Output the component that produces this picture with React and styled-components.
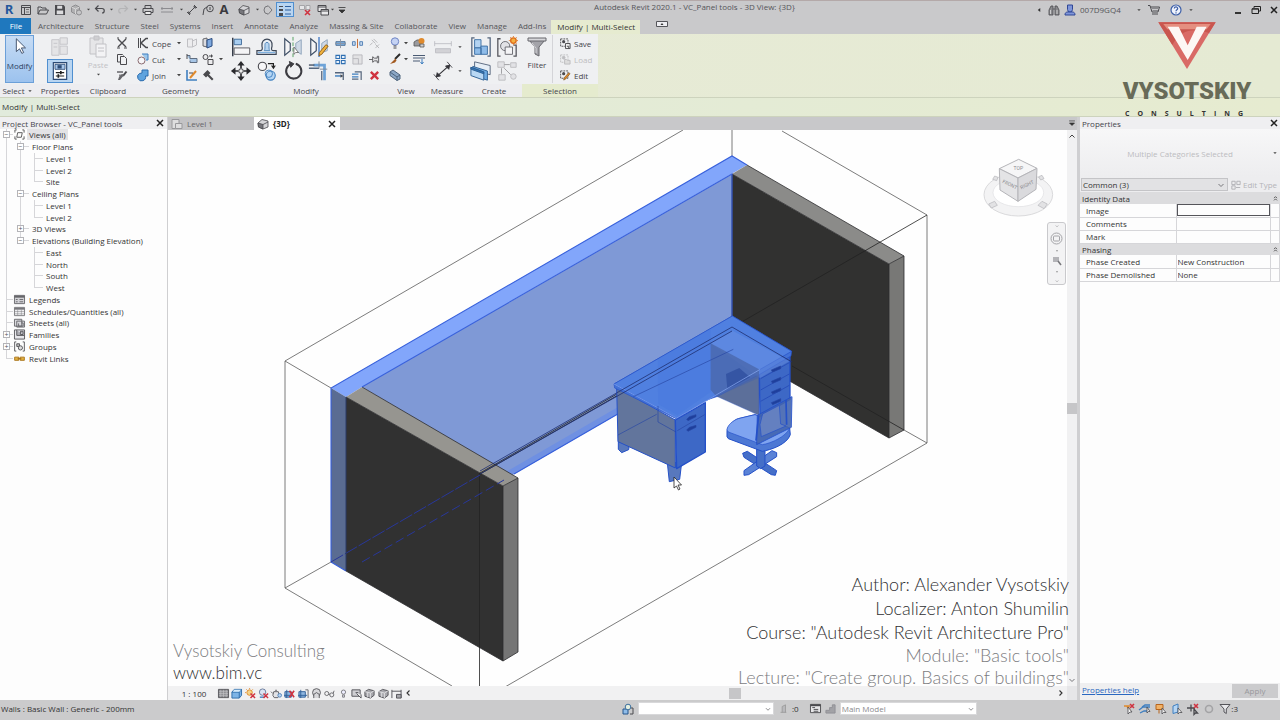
import React, { useState } from "react";
import styled, { createGlobalStyle, css } from "styled-components";

const GlobalStyle = createGlobalStyle`
  * {
    box-sizing: border-box;
  }

  body {
    margin: 0;
    background: #cbcbcb;
    color: #333;
    font-family: "Open Sans", "Noto Sans", sans-serif;
    font-size: 8px;
    line-height: 11px;
  }

  button, input, select {
    margin: 0;
    padding: 0;
    border: 0;
    background: none;
    color: inherit;
    font: inherit;
  }

  ul {
    margin: 0;
    padding: 0;
    list-style: none;
  }
`;

/* ---------- icons ---------- */

const INK = "#4a4a4e";
const BLUE = "#3f7fc0";
const SKY = "#9cc6ea";
const ORANGE = "#e08a2c";
const RED = "#cf3340";

// small icons live on a 12x12 grid
const small = {
  doc: (
    <g fill="none" stroke={INK}>
      <path d="M1.5 1.5h9v9h-9zM1.5 3.5h9M4.5 3.5v7" />
      <path d="M6 5.5h3M6 8h3" stroke="#777" />
    </g>
  ),
  open: <path d="M1 10V3h3l1 1h4v2M1 10l2-4h8.5L9.500 10z" fill="none" stroke={INK} />,
  save: (
    <g>
      <path d="M1 1h8.500L11 2.500V11H1z" fill={INK} />
      <path d="M3.200 1.700h5v3h-5zM2.700 6.500h6.500v3.800H2.700z" fill="#dcdcde" />
    </g>
  ),
  sync: (
    <g fill="#b0b0b2" stroke="#8d8d90">
      <path d="M1.500 3l4-2 4 2v5l-4 2-4-2z" />
      <path d="M1.500 3l4 2 4-2M5.500 5v5" fill="none" stroke="#d5d5d6" />
      <circle cx="9" cy="8.500" r="2.500" fill="#c6c6c8" />
    </g>
  ),
  undo: <path d="M4.500 1.500L1.500 4.500l3 3M1.500 4.500H8c3 0 3 4.500 0 4.500" fill="none" stroke={INK} strokeWidth="1.200" />,
  redo: <path d="M7.500 1.500l3 3-3 3M10.500 4.500H4c-3 0-3 4.500 0 4.500" fill="none" stroke="#b4b4b6" strokeWidth="1.200" />,
  print: (
    <g stroke={INK} fill="none">
      <path d="M3 4V1.500h6V4M1 4.500h10v4H1z" />
      <path d="M3 7.500h6v3H3z" fill="#eee" />
    </g>
  ),
  measureBar: <path d="M0 4.500h12M0 8h12M1 3v3M11 3v3" stroke="#8c8c90" fill="none" />,
  dim: (
    <g stroke={INK} fill={INK}>
      <path d="M2 10l8-8M1 8l3 3M8 1l3 3" fill="none" />
      <path d="M2 10l.5-3L5 9.500zM10 2l-3 .5L9.500 5z" strokeWidth="0" />
    </g>
  ),
  tag: (
    <g fill="none" stroke={INK}>
      <path d="M1 11l1-6 3-2" />
      <circle cx="8" cy="4.500" r="3.300" />
      <path d="M8 3v3" />
    </g>
  ),
  house: (
    <g stroke={INK} strokeWidth=".8">
      <path d="M1 5l4-3.500L11 3v6L6 11 1.500 9z" fill="#d5d5d8" />
      <path d="M1 5l5 1.500V11L1.500 9z" fill="#77777c" />
      <path d="M6 6.500L11 4" fill="none" />
    </g>
  ),
  section: <path d="M6 1.500L10 6l-4 4.500M6 2a4 4 0 100 8" fill="none" stroke="#77777b" />,
  thin: (
    <g fill={INK}>
      <path d="M0 2h4v1H0zM0 5h4v2H0zM0 9h4v3H0z" />
      <path d="M6 2h6v1H6zM6 5.500h6v1H6zM6 9.500h6v1H6z" fill="#2d5fa0" />
    </g>
  ),
  closeHidden: (
    <g>
      <path d="M.5 1.500h5v4h-5zM7 1.500h4v4H7z" fill="#e6e6e8" stroke="#a5a5a8" />
      <path d="M6 6l5 5M11 6l-5 5" stroke={RED} strokeWidth="1.600" />
    </g>
  ),
  windows: (
    <g fill="#e8e8ea" stroke={INK}>
      <path d="M1 1.500h8v6H1zM1 3h8" />
      <path d="M4 5.500h7.500V11H4zM4 7h7.500" />
    </g>
  ),
  binoculars: (
    <g fill="#8a8a8e" stroke={INK} strokeWidth=".8">
      <path d="M1 11V6l2-4h2v9zM11 11V6L9 2H7v9zM5 5h2" />
      <path d="M2.500 6v4M9 6v4" stroke="#ddd" />
    </g>
  ),
  user: (
    <g fill="#7f95d8" stroke="#2f4796">
      <path d="M3.500 1h5v4.500L7.500 8h-3l-1-2.500z" />
      <path d="M1 11c0-3 2-3 3.500-3h3c1.500 0 3.500 0 3.500 3z" />
    </g>
  ),
  cart: (
    <g fill="none" stroke={INK}>
      <path d="M0 1.500h2l2 6.500h6l1.500-5H2.600M4 10h6" />
      <path d="M4 4.500h6.500M4.500 6.500h5.500" stroke="#8a8a8e" />
    </g>
  ),
  help: (
    <g>
      <circle cx="6" cy="6" r="5" fill="#eef2fb" stroke="#3d5fa8" strokeWidth="1.200" />
      <path d="M4.300 4.600c0-2.200 3.400-2.200 3.400 0 0 1.300-1.700 1.200-1.700 2.700M6 8.300v1.200" fill="none" stroke="#3d5fa8" strokeWidth="1.200" />
    </g>
  ),
  minimize: <path d="M3 9h6" stroke="#222" strokeWidth="1.800" />,
  restore: <path d="M4 4V2.500h6.500v4.500H8.500M2 4.800h6.500v4.700H2zM2 5h6.500" fill="none" stroke="#222" />,
  close: <path d="M3 3l6 6M9 3L3 9" stroke="#222" strokeWidth="1.500" />,
  scissors: (
    <g stroke={INK} fill="none">
      <path d="M2 2l8 8M10 2l-8 8" strokeWidth="1.400" />
      <path d="M1 1h2M9 1h2M1 11h3M8 11h3" />
    </g>
  ),
  copy: <path d="M1.500 1.500h5l1 1M1.500 1.500V9H4M4.500 3.500h4l2 2v6h-6z" fill="none" stroke={INK} />,
  match: (
    <g>
      <path d="M1 2h6v2H1zM3 5.500h4v2H3z" fill="#88888c" />
      <path d="M10.500 2.500L7 7" stroke={INK} strokeWidth="2" />
      <path d="M8 6L4 11H2l1-3 3-3z" fill="#66666a" />
    </g>
  ),
  cope: (
    <g fill="none" stroke={INK}>
      <path d="M1.500 1v10M3.500 1v10" />
      <path d="M11 1.500H9L4 6l5 4.500h2" strokeWidth="1.600" />
    </g>
  ),
  cut: (
    <g>
      <path d="M5 1h6v6H9" fill={SKY} stroke={BLUE} />
      <circle cx="4.500" cy="7.500" r="3.500" fill="#f6f6f8" stroke="#8a6b70" />
    </g>
  ),
  join: <path d="M5 1h6v6H8.500A4 4 0 112.500 4.500L5 4z" fill="#5fa3de" stroke="#2c6cae" />,
  wallJoin: <path d="M1.500 2h5v8h-5zM6.500 4l4-2v6l-4 2" fill="#ececee" stroke="#c0c0c4" />,
  split: (
    <g>
      <path d="M1 2l4-1v9l-4-1z" fill="#dcdce0" stroke={INK} strokeWidth=".8" />
      <path d="M5 3l5-1.500v7.500L5 11z" fill="#7fa9df" stroke="#27497e" />
    </g>
  ),
  beam: (
    <g>
      <path d="M1 2.500h3v3h7v4H4v-2" fill="#a6c5e6" stroke="#5f6d80" />
      <path d="M1 1v5" stroke={INK} />
    </g>
  ),
  paint: (
    <g fill="#ececee" stroke={INK}>
      <circle cx="3.500" cy="4" r="2.500" />
      <path d="M6 6.500h5v5H6z" />
      <path d="M7 3h4M9.500 1.500v3" fill="none" />
    </g>
  ),
  demolish: (
    <g>
      <path d="M1 1v10h10" fill="none" stroke={BLUE} strokeWidth="1.600" />
      <path d="M4 9L10 2" stroke={ORANGE} strokeWidth="2" />
      <path d="M3 4h4" stroke={INK} />
    </g>
  ),
  hammer: <path d="M1 5.500L5.500 1l3 3L7 5.500l4.500 4.500L10 11.500 5.500 7 4 8.500z" fill={INK} />,
  splitEl: (
    <g>
      <path d="M1 4h10v4H1z" fill="#7fb1e2" stroke="#4c6d93" />
      <path d="M0 6h12M6 1v10" stroke="#8b95a4" />
    </g>
  ),
  splitGap: (
    <g fill="#c6d9ee" stroke="#4f7db3">
      <path d="M.5 4h3v4h-3zM8.500 4h3v4h-3z" />
      <path d="M6 1v10" stroke="#c4662c" />
    </g>
  ),
  unpin: (
    <g stroke="#b3b3b7" fill="#dadade">
      <path d="M3 2l4 4M5 1l4 4M1 8l3-3" />
      <path d="M7 7l4 4M11 7l-4 4" />
    </g>
  ),
  array: <path d="M1 1.500h4v3.500H1zM7 1.500h4v3.500H7zM1 7h4v3.500H1zM7 7h4v3.500H7z" fill="#e6f0fa" stroke="#2f6fb2" strokeWidth="1.100" />,
  scale: <path d="M1 1h10v10H1zM1 5h6v6" fill="#e2e2e4" stroke="#b8b8bc" />,
  pin: <path d="M0 6h4M4 3v6l2-1.500h3V9.500h1.500v-7H9v2H6z" fill="#e6e6e8" stroke="#5a5a5e" />,
  trim: (
    <g>
      <path d="M0 6.500h7" stroke="#3f7fc0" strokeWidth="1.600" />
      <path d="M0 3h9v8" fill="none" stroke="#55657c" strokeWidth="1.400" />
      <path d="M6 4.500l3 2-3 2z" fill={INK} />
    </g>
  ),
  trimMulti: (
    <g>
      <path d="M0 4.500h7M0 7.500h7" stroke="#3f7fc0" strokeWidth="1.500" />
      <path d="M3 2h7v9M0 10h7" fill="none" stroke="#55657c" strokeWidth="1.300" />
    </g>
  ),
  remove: <path d="M2 2l8 8M10 2l-8 8" stroke={RED} strokeWidth="2.600" />,
  bulb: (
    <g>
      <circle cx="6" cy="4.500" r="3.700" fill="#c5d3f4" stroke="#6e84c4" />
      <path d="M4.500 9h3M4.500 11h3" stroke={INK} />
    </g>
  ),
  override: (
    <g>
      <path d="M1 5l3-2h3v6H1z" fill="#9a9a9e" stroke="#555" strokeWidth=".8" />
      <circle cx="8.500" cy="4" r="3" fill={ORANGE} />
      <path d="M7 7h4v3H7z" fill="#cfcfd2" stroke="#555" strokeWidth=".8" />
    </g>
  ),
  brush: (
    <g>
      <path d="M11 1L6 6" stroke="#2b2b2b" strokeWidth="2" />
      <path d="M6.500 5.500L1 11l5-1.500 1.500-2z" fill="#a35a20" />
    </g>
  ),
  linework: (
    <g>
      <path d="M0 2.500h12M0 5h12M0 8h7" stroke="#4a5b74" strokeWidth="1.200" />
      <path d="M9 6v5M7.500 9L9 11l1.500-2" stroke={BLUE} fill="none" />
    </g>
  ),
  displace: (
    <g>
      <path d="M1 3l3-2 7 5v4l-3 1.500L1 6.500z" fill="#8ba7c6" stroke="#4f647d" />
      <path d="M1 3l7 5v3.500M8 8l3-2" fill="none" stroke="#4f647d" />
    </g>
  ),
  selSave: (
    <g>
      <path d="M.7 1h8v8h-8z" fill="none" stroke={INK} strokeDasharray="2 1" />
      <circle cx="4" cy="4" r="1.700" fill={INK} />
      <path d="M6 6h5v5.500H6z" fill="#eee" stroke={INK} />
      <path d="M7.500 9h2v2.500" stroke={INK} fill="none" />
    </g>
  ),
  selLoad: (
    <g stroke="#bdbdc0" fill="none">
      <path d="M.7 1h8v8h-8z" strokeDasharray="2 1" />
      <path d="M5 6l2 0 1 1h3v4H5z" fill="#ddd" />
      <circle cx="4" cy="4" r="1.500" fill="#bdbdc0" />
    </g>
  ),
  selEdit: (
    <g>
      <path d="M.7 1h8v8h-8z" fill="none" stroke={INK} strokeDasharray="2 1" />
      <circle cx="4" cy="4" r="1.700" fill={INK} />
      <path d="M11 4l-5 6-2 1 .5-2.500 5-5.500z" fill={ORANGE} stroke="#6b4a1c" strokeWidth=".6" />
    </g>
  ),
  views: (
    <g fill="none" stroke="#555">
      <path d="M3 1H1v3M9 1h2v3M3 11H1V8M9 11h2V8" />
      <path d="M4 4h5L8 9H3z" />
    </g>
  ),
  legend: (
    <g stroke="#66666a" fill="#d2d2d6">
      <path d="M.5 1.500h11v9H.5z" />
      <path d="M.5 3h11" strokeWidth="2" />
      <path d="M2 6h2M6 6h4M2 8.500h2M6 8.500h4" />
    </g>
  ),
  schedule: (
    <g stroke="#77777b" fill="#efeff1">
      <path d="M.5 1.500h11v9H.5z" />
      <path d="M.5 3h11" strokeWidth="2" />
      <path d="M.5 6h11M.5 8.500h11M4 4v6M8 4v6" strokeWidth=".5" />
    </g>
  ),
  sheet: (
    <g stroke="#66666a" fill="#dadade">
      <path d="M.5 2.500h8V10H.5zM3 4.500h8.500V11H3z" />
      <path d="M8 6.500h2V10H5V7" fill="none" />
    </g>
  ),
  family: (
    <g stroke="#55555a" fill="#e8e8ec">
      <path d="M.5 1h11v10H.5z" />
      <path d="M3 1v6h8M7 2.500h3V6H7z" fill="#b0b0b6" />
    </g>
  ),
  groups: (
    <g fill="none" stroke="#55555a">
      <path d="M2.500 1H.7v10h1.800M9.500 1h1.800v10H9.500" />
      <path d="M3 3h3v3H3z" fill="#bbb" />
      <circle cx="7" cy="7.500" r="2.300" fill="#ddd" />
    </g>
  ),
  link: (
    <g fill="#e2b040" stroke="#a8741a">
      <path d="M.7 4.500h4.500v3.500H.7zM6.800 4.500h4.500v3.500H6.800z" />
      <path d="M4 6.200h4" strokeWidth="1.600" />
    </g>
  ),
  plan: (
    <g fill="#dededf" stroke="#98989b">
      <path d="M1 1.500h7v9H1z" />
      <path d="M4.500 5.500h6.500v5H4.500z" />
    </g>
  ),
  detail: (
    <g>
      <path d="M.5 1.500h11v9H.5z" fill="#8d8d91" stroke="#55555a" />
      <path d="M1 4h10M1 6h10M1 8h10M3 2v8M6 2v8M9 2v8" stroke="#c9c9cc" strokeWidth=".6" />
    </g>
  ),
  cube: (
    <g stroke="#2d6ba8">
      <path d="M1 4.500l2.500-3h8v6.500L9 11H1z" fill="#7db4e6" />
      <path d="M1 4.500h8V11M9 4.500l2.500-3" fill="none" />
      <path d="M3.500 2h7.500L9 4H2z" fill="#d6eafa" strokeWidth="0" />
    </g>
  ),
  sunOff: (
    <g>
      <circle cx="5" cy="5" r="3" fill="#f4d48a" stroke={ORANGE} />
      <path d="M5 0v1M0 5h1M1.500 1.500l1 1M8.500 1.500l-1 1" stroke={ORANGE} />
      <path d="M6 6l5 5M11 6l-5 5" stroke={RED} strokeWidth="1.600" />
    </g>
  ),
  shadowOff: (
    <g>
      <circle cx="5" cy="4.500" r="3.500" fill="#dbe4f2" stroke="#66789a" />
      <path d="M2 10h5" stroke={BLUE} strokeWidth="1.500" />
      <path d="M6 6l5 5M11 6l-5 5" stroke={RED} strokeWidth="1.600" />
    </g>
  ),
  teapot: (
    <g fill="#e3e3e6" stroke="#5c5c60">
      <path d="M3 4h5l1 4-1.500 2.500H3.500L2 8zM2 6L0 4M4.500 2.500h2" />
      <circle cx="9.500" cy="8" r="2" fill="#b9d3ef" stroke="#5585bb" />
    </g>
  ),
  cropOff: (
    <g>
      <path d="M1 4h7v6H1zM3 2v9M0 8h10" fill="#8fb7e0" stroke="#2e5f98" />
      <path d="M6 3l5 7M11 3l-5 7" stroke={RED} strokeWidth="1.800" />
    </g>
  ),
  crop: (
    <g>
      <path d="M1 4h7v6H1zM3 2v9M0 8h10" fill="#8fb7e0" stroke="#2e5f98" />
      <path d="M8 2h3v9" fill="none" stroke="#66666a" />
    </g>
  ),
  lock: (
    <g fill="#d8d8db" stroke="#55555a">
      <circle cx="6" cy="5" r="4.300" />
      <path d="M3 11V7l3-2 3 2v4" />
    </g>
  ),
  glasses: (
    <g fill="none" stroke="#66666a">
      <circle cx="3" cy="6" r="2.200" />
      <circle cx="8.500" cy="7.500" r="2.200" />
      <path d="M5 6.500l1.500.5M10 6l1-3" />
    </g>
  ),
  bulbSmall: (
    <g fill="#eef" stroke="#77777c">
      <circle cx="6" cy="4.500" r="2.300" />
      <path d="M5 7.500h2v2.500H5z" />
    </g>
  ),
  panel: (
    <g fill="#cfcfd3" stroke="#4f4f54">
      <path d="M1 2h9v7H1z" />
      <path d="M5 5h3M6 6l5 5v-4" fill="#eee" />
    </g>
  ),
  model: (
    <g fill="#a7a7ac" stroke="#4f4f54">
      <path d="M1 4l4-2.500L11 3v5l-4 3-6-2z" />
      <path d="M1 4l6 1.500V11M7 5.500L11 3M4 5v5" fill="none" stroke="#e0e0e3" />
    </g>
  ),
  reveal: (
    <g fill="none" stroke="#4f4f54">
      <path d="M1 2v9M11 2v9M1 3.500h10" />
      <path d="M6 7h5v4H6z" fill="#a7a7ac" />
    </g>
  ),
  workset: (
    <g>
      <path d="M1 6h5v5H1z" fill="#8fbce8" stroke="#27568c" />
      <circle cx="6" cy="4" r="2.800" fill="#e6f0e0" stroke="#3b6f9e" />
      <path d="M9 5h2v6H8" fill="none" stroke={INK} />
    </g>
  ),
  editable: <path d="M3 10h7M5 10V3l4-2v9" fill="#b9b9bc" stroke="#999" />,
  design: (
    <g stroke={INK} fill="#e6e6e8">
      <path d="M.5 1.500h11v9H.5z" />
      <path d="M.5 2.500h11" strokeWidth="2" />
      <path d="M2.500 5h3M4 7h5M4 9h5" />
    </g>
  ),
  design2: <path d="M1 8h4V5h3V2h3v9H1z" fill="#a2a2a6" stroke="#919195" />,
  pickOff: (
    <g>
      <path d="M1 3h6M4 3l3 5" stroke={ORANGE} strokeWidth="1.600" />
      <path d="M5 4v7l2-2h2z" fill="#f6f6f6" stroke={INK} strokeWidth=".8" />
      <path d="M7 1l4 4M11 1L7 5" stroke={RED} strokeWidth="1.600" />
    </g>
  ),
  pickUnder: (
    <g>
      <path d="M0 7l4-3h7M1 10l4-2h5M3 4l3-2h5" fill="none" stroke={BLUE} strokeWidth="1.300" />
      <path d="M8 4v6l1.500-1.500H11z" fill="#f6f6f6" stroke={INK} strokeWidth=".8" />
    </g>
  ),
  pickPin: (
    <g>
      <path d="M1 1.500h7v5H1zM4 6.500v4" fill="#f1b267" stroke="#b7641c" />
      <path d="M7 5v6l1.500-1.500h2.500z" fill="#f6f6f6" stroke={INK} strokeWidth=".8" />
    </g>
  ),
  pickFace: (
    <g>
      <path d="M2 3l5-2v8l-5 1.500z" fill="#b6d5f3" stroke={BLUE} />
      <path d="M7 5v6l1.500-1.500h2.500z" fill="#f6f6f6" stroke={INK} strokeWidth=".8" />
    </g>
  ),
  drag: (
    <g>
      <path d="M0 5h8M4 1.500v7M7 6v5.500l1.500-1.500h2z" fill="none" stroke={INK} strokeWidth="1.300" />
      <path d="M7 1l4 4M11 1L7 5" stroke={RED} strokeWidth="1.600" />
    </g>
  ),
  ring: <circle cx="6" cy="6" r="3.500" fill="none" stroke="#a3a3a5" strokeWidth="1.600" />,
  funnel: <path d="M1 1.500h10L7.300 6v4.500L5 9V6z" fill="#e8e8ea" stroke="#55555a" />,
  editType: <path d="M1 1.500h4v4H1zM7 1.500h4v4H7zM1 7h4v4H1zM6 9h5" fill="none" stroke="#aaaaae" />,
  down: <path d="M4 5h4L6 7.200z" fill="#444" />,
  customize: <path d="M2.500 3.500h7M3 6h6L6 9z" fill="#333" stroke="#333" strokeWidth=".8" />,
  left: <path d="M7.500 3.500v5L4.500 6z" fill="#333" />,
  chevron: <path d="M3.500 5L6 7.500 8.500 5" fill="none" stroke="#77777b" />,
  up: <path d="M3.500 7.500L6 5l2.500 2.500" fill="none" stroke="#444" />,
  next: <path d="M4.500 3.500L7 6 4.500 8.500" fill="none" stroke="#333" strokeWidth="1.100" />,
  prev: <path d="M7.500 3.500L5 6l2.500 2.500" fill="none" stroke="#333" strokeWidth="1.100" />,
  collapse: <path d="M4 5.500L6 3.500l2 2M4 8.500L6 6.500l2 2" fill="none" stroke="#333" />,
  ribbonToggle: (
    <g>
      <path d="M.5 3.500h11v5H.5z" fill="#eeeef2" stroke="#55555a" />
      <path d="M4.500 7h3L6 5z" fill="#333" />
    </g>
  ),
};

// ribbon icons live on a 24x24 grid
const large = {
  cursor: <path d="M8 3v14l3.500-3 2.500 5 2-1-2.500-5h4.500z" fill="#fff" stroke="#3a4a66" />,
  props: (
    <g fill="#e4e4e6" stroke="#c4c4c8">
      <path d="M3 4h8v17H3zM12 2h8v7h-8zM12 11h8v9h-8z" />
      <path d="M5 8h4M5 12h4" />
    </g>
  ),
  palette: (
    <g>
      <path d="M4 2h16v20H4z" fill="#fff" stroke="#2c4a74" strokeWidth="1.400" />
      <path d="M6 4h12v6H6z" fill="#a9c7ea" stroke="#2c4a74" />
      <path d="M9 5h5v4H9z" fill="#2c4a74" />
      <path d="M7 14h10M7 18h10" stroke="#222" strokeWidth="1.400" />
      <path d="M13 12v4M10 16v4" stroke="#222" strokeWidth="2" />
    </g>
  ),
  paste: (
    <g fill="#e6e6e8" stroke="#c2c2c6">
      <path d="M4 3h13v16H4z" />
      <path d="M8 1h5v4H8z" fill="#cfcfd2" />
      <path d="M10 9h10v13H10z" fill="#f3f3f5" />
      <path d="M12 13h6M12 16h6" />
    </g>
  ),
  align: (
    <g>
      <path d="M3 2v20" stroke="#333a48" strokeWidth="1.600" />
      <path d="M4.500 3.500h8v6h-8z" fill="#a8cdf0" stroke="#3b6896" />
      <path d="M4.500 13h17v7h-17z" fill="#f4f4f6" stroke="#55555c" />
    </g>
  ),
  offset: (
    <g fill="none">
      <path d="M1 20h21v-4h-3c-3 0-2-3-1.500-5C19 1 5 1 6.500 11c.5 2 1 5-2 5H1z" fill="#e9eef4" stroke="#3c4656" strokeWidth="1.300" />
      <path d="M2 18h19" stroke="#7fb0de" strokeWidth="1.400" />
      <path d="M9 16c2-3-1-9 3-9s1 6 3 9z" fill="#b8d5f0" stroke="#4a82b8" />
    </g>
  ),
  mirrorPick: (
    <g>
      <path d="M3 3v18l6-5V8z" fill="#f4f4f6" stroke="#3f4f66" strokeWidth="1.300" />
      <path d="M21 4v16l-6-4V8z" fill="#cfd9e6" stroke="#8ca2bb" />
      <path d="M12 1v22" stroke="#4d9c58" strokeDasharray="4 2" />
      <path d="M13 12v8l2-2 3 0z" fill="#fff" stroke="#555" strokeWidth=".8" />
    </g>
  ),
  mirrorDraw: (
    <g>
      <path d="M3 3v18l6-5V8z" fill="#f4f4f6" stroke="#3f4f66" strokeWidth="1.300" />
      <path d="M21 4v12l-6 2V8z" fill="#cfd9e6" stroke="#8ca2bb" />
      <path d="M12 1v22" stroke="#3b74c4" strokeWidth="1.400" />
      <path d="M22 11l-7 9-3 1.500.5-3.500 7-8.500z" fill="#f0b23c" stroke="#8f5c14" />
    </g>
  ),
  move: (
    <g fill="#2a2a2e">
      <path d="M12 1l4 5H8zM12 23l4-5H8zM1 12l5-4v8zM23 12l-5-4v8z" />
      <path d="M12 5v4M12 15v4M5 12h4M15 12h4" stroke="#2a2a2e" strokeWidth="1.800" />
      <circle cx="12" cy="12" r="2.500" fill="#eee" stroke="#2a2a2e" />
    </g>
  ),
  rotateCopy: (
    <g>
      <circle cx="7" cy="7" r="4.500" fill="#f6f6f8" stroke="#4a4a50" strokeWidth="1.200" />
      <circle cx="16" cy="17" r="5" fill="#b6d6f4" stroke="#3e7fbe" strokeWidth="1.200" />
      <circle cx="14" cy="15" r="4" fill="none" stroke="#3e7fbe" />
      <path d="M13 4h6v4M17 6l2 3 2-3" fill="none" stroke="#222" strokeWidth="1.300" />
    </g>
  ),
  rotate: (
    <g fill="none" stroke="#3c3c42" strokeWidth="2.200">
      <path d="M10 4.200A8.300 8.300 0 1015 4" />
      <path d="M8 1.500l5 2.700L9.500 8z" fill="#3c3c42" strokeWidth="1" />
    </g>
  ),
  corner: (
    <g fill="none">
      <path d="M1 9h11M15 12v10" stroke="#55657c" strokeWidth="1.400" />
      <path d="M6 5.500h12V22" stroke="#6ea3d8" strokeWidth="3" />
      <path d="M1 5.500h6" stroke="#3a4658" strokeWidth="1.400" />
      <path d="M12 1.500v8M21 10h-8" stroke="#7c8796" />
    </g>
  ),
  measureFaded: (
    <g stroke="#bbbbc0" fill="#d2d2d6">
      <path d="M2 8h20M2 5v6M22 5v6" fill="none" />
      <path d="M3 14h18v5H3z" />
    </g>
  ),
  measure: (
    <g fill="none" stroke="#333338">
      <path d="M4 19L20 5" strokeWidth="1.400" />
      <path d="M1 16l6 7M17 1l6 7" />
      <path d="M4 19l1-5 4 4zM20 5l-5 1 4 4z" fill="#333338" />
    </g>
  ),
  assembly: (
    <g>
      <path d="M5 2H2v20h3M19 2h3v20h-3" fill="none" stroke="#55657c" strokeWidth="1.400" />
      <path d="M5 4h7v9H5z" fill="#b4d3f1" stroke="#3b6da3" />
      <path d="M5 13h7v7H5zM12 11h7v9h-7z" fill="#8fbce9" stroke="#3b6da3" />
    </g>
  ),
  group: (
    <g>
      <path d="M5 3H2v19h3M19 10h3v12h-3" fill="none" stroke="#55555c" strokeWidth="1.400" />
      <circle cx="10" cy="11" r="5" fill="#e2e2e6" stroke="#66666c" />
      <path d="M10 12h8v8h-8z" fill="#f4f4f6" stroke="#66666c" />
      <circle cx="19" cy="5" r="3" fill="#f5b040" stroke="#de6e1c" strokeWidth="1.500" />
      <path d="M19 0v1M19 9v1M14 5h1M23 5h1M15.500 1.500l1 1M22.500 8.500l-1-1M22.500 1.500l-1 1" stroke="#de6e1c" />
    </g>
  ),
  parts: (
    <g stroke="#2c5d92">
      <path d="M5 2l17 4v10l-17-4z" fill="#e6eef6" stroke="#55657c" />
      <path d="M3 7l16 5v10L3 17z" fill="#6fabe2" />
      <path d="M1 8l14 5v9L1 17z" fill="#b9d8f4" />
      <path d="M1 8l14 5v2L1 10z" fill="#3478b8" />
    </g>
  ),
  similar: (
    <g stroke="#bcbcc0" fill="#e2e2e5">
      <path d="M2 2h7v6H2zM16 3h6v5h-6zM3 16h7v6H3z" />
      <circle cx="19" cy="18" r="3" />
      <path d="M9 5h6M6 9v6M9 9l7 7" fill="none" stroke="#9a9a9e" />
    </g>
  ),
  filter: (
    <g stroke="#66666c">
      <path d="M4 5h16l-6 7v9l-4-2v-7z" fill="#a3a3a9" />
      <path d="M3 3h18v3H3z" fill="#d7d7db" />
      <path d="M7 8l4 5v5" fill="none" stroke="#d9d9dd" />
    </g>
  ),
};

const Svg = styled.svg`
  display: block;
  flex: none;
  overflow: visible;
`;

const Icon = ({ name, size = 12 }) => (
  <Svg width={size} height={size} viewBox="0 0 12 12" aria-hidden="true">
    {small[name]}
  </Svg>
);

const BigIcon = ({ name, size = 22 }) => (
  <Svg width={size} height={size} viewBox="0 0 24 24" aria-hidden="true">
    {large[name]}
  </Svg>
);

/* ---------- layout ---------- */

const Page = styled.div`
  display: flex;
  flex-direction: column;
  min-height: 100vh;
  overflow: hidden;
`;

const Header = styled.header`
  position: relative;
  overflow: hidden;
  flex: none;
`;

const TitleBar = styled.div`
  display: grid;
  grid-template-columns: 1fr auto 1fr;
  align-items: center;
  height: 18px;
  border-top: 1px solid #b4a9a9;
  background: #c9c9cb;
`;

const QuickAccess = styled.div`
  display: flex;
  align-items: center;
`;

const QuickButton = styled.button`
  display: flex;
  align-items: center;
  justify-content: center;
  width: ${(p) => p.$w}px;
  height: 15px;
  font-size: 13px;
  font-weight: 700;
  color: ${(p) => p.$color || "#3a3a3e"};
  ${(p) =>
    p.$on &&
    css`
      border: 1px solid #4f8fd0;
      background: #b9d5f1;
    `}
`;

const TitleText = styled.div`
  align-self: start;
  padding-left: 109px;
  color: #55555a;
  line-height: 12px;
`;

const Account = styled.div`
  display: flex;
  align-items: center;
  justify-content: flex-end;
  gap: 4px;
  color: #55555a;
`;

const UserName = styled.span`
  width: 50px;
`;

const WindowControls = styled.div`
  display: flex;
  gap: 6px;
  margin-left: 32px;
`;

const IconButton = styled.button`
  display: flex;
  align-items: center;
  justify-content: center;
  height: 12px;
`;

const HelpButton = styled(IconButton)`
  margin-left: 6px;
`;

const TabRow = styled.nav`
  display: flex;
  height: 16px;
  background: #c9c9cb;
`;

const RibbonTab = styled.button`
  padding: 0 5px 0 6px;
  color: #55555a;
  line-height: 16px;
  white-space: nowrap;
  ${(p) =>
    p.$file &&
    css`
      width: 31px;
      margin-right: 1px;
      background: #1f78be;
      color: #fff;
    `}
  ${(p) =>
    p.$active &&
    css`
      margin: 2px 16px 0 0;
      line-height: 14px;
      background: #e6ebd0;
      color: #333;
    `}
`;

const Ribbon = styled.div`
  display: flex;
  height: 64px;
  border-bottom: 1px solid #cdd3bd;
  background: linear-gradient(90deg, #e8ebd8, #e5ead3);
`;

const Panel = styled.section`
  display: flex;
  flex-direction: column;
  width: ${(p) => p.$w}px;
  background: ${(p) => (p.$green ? "#e5ebce" : "#ededf0")};
`;

const PanelBody = styled.div`
  display: flex;
  height: 50px;
  padding: 1px 0 1px ${(p) => p.$pad || 0}px;
  background: #eff0f2;
`;

const PanelTitle = styled.div`
  display: flex;
  align-items: center;
  justify-content: center;
  height: 13px;
  color: #44444a;
`;

const ModifyButton = styled.button`
  display: flex;
  flex-direction: column;
  align-items: center;
  gap: 2px;
  width: 29px;
  border: 1px solid #6b9fd8;
  background: linear-gradient(#c7dcf4, #9cc2ee);
  color: #2e4262;
`;

const Stack = styled.div`
  display: flex;
  flex-direction: column;
  align-items: center;
  width: ${(p) => p.$w}px;
`;

const ToggleButton = styled.button`
  display: flex;
  align-items: center;
  justify-content: center;
  width: 26px;
  height: 24px;
  ${(p) =>
    p.$on &&
    css`
      border: 1px solid #4f8fd0;
      background: #b9d5f1;
    `}
`;

const TallButton = styled.button`
  display: flex;
  flex-direction: column;
  align-items: center;
  width: ${(p) => p.$w}px;
  color: ${(p) => (p.$faded ? "#c2c2c6" : "#44444a")};
`;

const Rows = styled.div`
  display: grid;
  grid-template-rows: repeat(3, 16px);
  grid-template-columns: ${(p) => p.$cols};
  justify-items: ${(p) => p.$align || "center"};
`;

const BigRows = styled.div`
  display: grid;
  grid-template-rows: repeat(2, 24px);
  grid-template-columns: ${(p) => p.$cols};
  place-items: center;
`;

const Tool = styled.button`
  display: flex;
  align-items: center;
  gap: 3px;
  color: ${(p) => (p.$faded ? "#bdbdc0" : "#44444a")};
`;

const Divider = styled.div`
  width: 1px;
  margin-right: 7px;
  background: #d4d4d8;
`;

const OptionsBar = styled.div`
  height: 19px;
  padding-left: 2px;
  border-bottom: 1px solid #cdd3bd;
  background: linear-gradient(90deg, #e1ebdc, #e6ebd0);
  line-height: 18px;
`;

const Brand = styled.div`
  position: absolute;
  top: 22px;
  right: 23px;
  display: flex;
  flex-direction: column;
  align-items: center;
  width: 140px;
`;

const BrandName = styled.div`
  margin-top: 6px;
  color: #686b58;
  font-family: Roboto, sans-serif;
  font-size: 24px;
  font-weight: 900;
  line-height: 30px;
`;

const BrandSub = styled.div`
  width: 124px;
  margin-top: 4px;
  font-size: 7px;
  font-weight: 700;
  letter-spacing: 8px;
  line-height: 8px;
  white-space: nowrap;
`;

const Workspace = styled.main`
  display: grid;
  grid-template-columns: 168px minmax(0, 1fr) 203px;
  flex: 1;
`;

const Dock = styled.aside`
  display: flex;
  flex-direction: column;
  background: #fdfdfd;
  border: solid #cfcfd1;
  border-width: ${(p) => (p.$right ? "0 0 0 3px" : "0 1px 0 0")};
`;

const DockTitle = styled.div`
  display: flex;
  align-items: center;
  justify-content: space-between;
  height: 12px;
  padding: 0 ${(p) => (p.$right ? 0 : 1)}px 0 2px;
  background: #efeff1;
  color: #44444a;
`;

/* ---------- project browser ---------- */

const Tree = styled.ul`
  display: grid;
  grid-auto-rows: 1fr;
  height: 235px;
`;

const TreeRow = styled.li`
  display: flex;
  align-items: center;
  white-space: nowrap;
`;

const line = "linear-gradient(#d6d6d9, #d6d6d9) no-repeat";

const Guide = styled.span`
  display: flex;
  align-items: center;
  align-self: stretch;
  width: ${(p) => p.$w}px;
  padding-left: 3px;
  background: ${(p) =>
    [
      p.$v && `${line} 6px 0 / 1px ${p.$v}`,
      p.$h && `${line} 6px 50% / ${p.$w - 7}px 1px`,
    ]
      .filter(Boolean)
      .join(", ") || "none"};
`;

const Expander = styled.button`
  display: flex;
  align-items: center;
  justify-content: center;
  width: 7px;
  height: 7px;
  border: 1px solid #b4b4b8;
  background: #fff;
  color: #55555a;
  font-size: 7px;
  line-height: 5px;
`;

const TreeLabel = styled.span`
  padding: 0 2px;
  background: ${(p) => (p.$selected ? "#e3e3e5" : "none")};
`;

const TreeIcon = styled.span`
  display: flex;
  width: 13px;
`;

const treeData = [
  { level: 0, label: "Views (all)", box: "−", icon: "views", selected: true },
  { level: 1, label: "Floor Plans", box: "−" },
  { level: 2, label: "Level 1" },
  { level: 2, label: "Level 2" },
  { level: 2, label: "Site", last: true },
  { level: 1, label: "Ceiling Plans", box: "−" },
  { level: 2, label: "Level 1" },
  { level: 2, label: "Level 2", last: true },
  { level: 1, label: "3D Views", box: "+" },
  { level: 1, label: "Elevations (Building Elevation)", box: "−", last: true },
  { level: 2, label: "East", end: true },
  { level: 2, label: "North", end: true },
  { level: 2, label: "South", end: true },
  { level: 2, label: "West", end: true, last: true },
  { level: 0, label: "Legends", icon: "legend" },
  { level: 0, label: "Schedules/Quantities (all)", icon: "schedule" },
  { level: 0, label: "Sheets (all)", icon: "sheet" },
  { level: 0, label: "Families", box: "+", icon: "family" },
  { level: 0, label: "Groups", box: "+", icon: "groups" },
  { level: 0, label: "Revit Links", icon: "link", last: true },
];

const ProjectBrowser = () => (
  <Dock>
    <DockTitle>
      Project Browser - VC_Panel tools
      <IconButton aria-label="Close browser">
        <Icon name="close" />
      </IconButton>
    </DockTitle>
    <Tree>
      {treeData.map((n, i) => (
        <TreeRow key={i}>
          <Guide $w={14} $v={n.level === 0 && n.last ? "50%" : "100%"} $h={n.level === 0}>
            {n.level === 0 && n.box && <Expander>{n.box}</Expander>}
          </Guide>
          {n.level > 0 && (
            <Guide $w={n.level === 1 ? 16 : 14} $v={!n.end && (n.level === 1 && n.last ? "50%" : "100%")} $h={n.level === 1}>
              {n.level === 1 && <Expander>{n.box}</Expander>}
            </Guide>
          )}
          {n.level === 2 && <Guide $w={16} $v={n.last ? "50%" : "100%"} $h />}
          {n.icon && (
            <TreeIcon>
              <Icon name={n.icon} size={11} />
            </TreeIcon>
          )}
          <TreeLabel $selected={n.selected}>{n.label}</TreeLabel>
        </TreeRow>
      ))}
    </Tree>
  </Dock>
);

/* ---------- 3D view ---------- */

const ViewArea = styled.section`
  display: grid;
  grid-template-columns: minmax(0, 1fr) 10px;
  grid-template-rows: 13px minmax(0, 1fr) 14px;
  background: #fff;
`;

const ViewTabs = styled.div`
  display: flex;
  grid-column: 1 / -1;
  background: #c8c8ca;
`;

const ViewTab = styled.button`
  display: flex;
  align-items: center;
  gap: 4px;
  width: 86px;
  padding: 0 2px 0 3px;
  background: ${(p) => (p.$active ? "#fff" : "#c3c3c5")};
  color: ${(p) => (p.$active ? "#222" : "#66666a")};
  font-weight: ${(p) => (p.$active ? 700 : 400)};
  text-align: left;

  span {
    flex: 1;
  }
`;

const TabMenu = styled(IconButton)`
  margin-left: auto;
`;

const Stage = styled.div`
  position: relative;
  display: flex;
`;

const SceneSvg = styled.svg`
  display: block;
  width: 100%;
  height: 100%;
`;

const ScrollBar = styled.div`
  display: flex;
  flex-direction: ${(p) => (p.$x ? "row" : "column")};
  flex: 1;
  align-items: center;
  justify-content: space-between;
  background: #f1f1f2;
`;

const Thumb = styled.div`
  width: ${(p) => (p.$x ? 12 : 10)}px;
  height: 11px;
  background: #c6c6c8;
`;

const ViewBar = styled.div`
  display: flex;
  align-items: center;
  background: #f1f1f2;
`;

const ScaleButton = styled.button`
  width: 50px;
  padding-left: 2px;
  text-align: center;
`;

const ViewIcons = styled.div`
  display: flex;
  justify-content: space-between;
  width: 184px;
`;

const Corner = styled.div`
  background: #e6e6e8;
`;

const Credits = styled.div`
  position: absolute;
  font-family: Lato, "Open Sans", sans-serif;
  font-weight: 300;
  white-space: nowrap;
  ${(p) =>
    p.$side === "right"
      ? css`
          right: -2px;
          bottom: -2px;
          font-size: 18px;
          text-align: right;
        `
      : css`
          left: 5px;
          bottom: 2px;
          font-size: 17px;
        `}
`;

const CreditLine = styled.div`
  color: ${(p) => (p.$soft ? "#7c7c7e" : "#303032")};
  line-height: ${(p) => (p.$tall ? 24 : 22)}px;
`;

const CubeHolder = styled.div`
  position: absolute;
  top: 27px;
  right: 13px;
`;

const NavBar = styled.div`
  position: absolute;
  top: 92px;
  right: 1px;
  display: flex;
  flex-direction: column;
  align-items: center;
  justify-content: space-between;
  width: 19px;
  height: 63px;
  border: 1px solid #c9c9cc;
  border-radius: 3px;
  background: #f3f3f4;
`;

const ViewCube = () => (
  <svg width="72" height="61" viewBox="66 125 216 183" role="img" aria-label="View cube">
    <ellipse cx="175" cy="238" rx="103" ry="64" fill="#f3f3f4" stroke="#dadadc" strokeWidth="3" />
    <ellipse cx="175" cy="232" rx="76" ry="42" fill="#fff" stroke="#e0e0e2" strokeWidth="2" />
    <path d="M176 132l55 27-57 29-56-28z" fill="#f6f6f7" stroke="#b4b4b8" strokeWidth="3" />
    <path d="M118 160l56 28v70l-54-34z" fill="#e4e4e6" stroke="#b4b4b8" strokeWidth="3" />
    <path d="M231 159l-57 29v70l54-36z" fill="#dadadd" stroke="#b4b4b8" strokeWidth="3" />
    <g fill="#8c8c90" fontFamily="Roboto, sans-serif" fontSize="15" textAnchor="middle">
      <text x="175" y="165">TOP</text>
      <text transform="translate(147 212) rotate(26)">FRONT</text>
      <text transform="translate(203 213) rotate(-26)">RIGHT</text>
    </g>
    <path d="M86 266l18-8 8 12-18 8zM234 270l12-12 16 8-10 14zM104 182l10 4-4 10-12-4zM236 184l10-4 6 10-10 4z" fill="#e2e2e4" stroke="#b4b4b8" strokeWidth="2" />
  </svg>
);

// desk and chair are drawn on their own 3x grid
const Furniture = () => (
  <g transform="translate(590 300) scale(.3333)" strokeLinejoin="round">
    <g stroke="#2450c8" strokeWidth="3">
      <path d="M85 405l37-6-6 50-21 9-10-10z" fill="#5878bd" />
      <path d="M232 488h43l-6 50-31 7z" fill="#5878bd" />
      <path d="M362 130l145 78v138l-127-57-20-100z" fill="#5c6f9a" strokeWidth="1" />
      <path d="M80 262l176 98v144L84 425z" fill="#62759c" />
      <path d="M256 360l90-52v148l-86 50z" fill="#3d68c6" strokeWidth="4" />
      <path d="M508 210l92-52v140l-90 52z" fill="#3d68c6" strokeWidth="4" />
      <path d="M72 252L427 48l178 106-2 14-92 54-131 68-36 12-84 55L74 264z" fill="#4372d6" strokeWidth="2" />
      <path d="M72 252L427 48l178 106-96 55-249 145z" fill="#5080e0" strokeWidth="2" />
    </g>
    <path d="M204 178l158-92v190l-100 70-58-34z" fill="#4475dc" opacity=".35" />
    <path d="M362 130l66-38 170 92-88 50z" fill="#6d92e2" opacity=".45" />
    <path d="M362 130l145 78v25l-127 57-18-20z" fill="#4a66a8" opacity=".75" />
    <path d="M408 222l40-18 32 28-40 22-28 12z" fill="#2c4c9c" opacity=".7" />
    <path d="M72 252l188 102 249-145" fill="none" stroke="#8fb0f6" strokeWidth="2" />
    <g fill="none" stroke="#2747a4" strokeWidth="2">
      <path d="M84 405l116-62M204 318v48l54 30M130 290l300-142M262 392l82-48" />
      <path d="M512 236l86-48M512 270l86-48M512 304l86-48" stroke="#1f44b4" />
      <path d="M290 358l8-8 20-6v6l-24 12zM290 390l8-8 20-6v6l-24 12zM544 210l28-12v8l-24 10zM544 244l28-12v8l-24 10zM544 276l28-12v8l-24 10zM544 308l28-12v8l-24 10z" fill="#1e3f9c" />
    </g>
    <g stroke="#2450c8" strokeWidth="3">
      <path d="M458 460l14-6 88 58-4 14-12-2-82-52z" fill="#456fc8" />
      <path d="M462 512l84-60 14 6v12l-84 54-14 2z" fill="#5a82d6" />
      <path d="M500 440h25v58l-13 8-12-8z" fill="#456fc8" />
      <path d="M411 394c0-14 20-34 34-38l50-12 104 40 2 20c-10 30-60 46-84 50l-102-38-4-6z" fill="#4d78d4" />
      <path d="M411 390c0-14 20-30 34-34l50-12 104 40c-10 26-56 46-82 50l-102-38z" fill="#7fa4f0" strokeWidth="2" />
      <path d="M502 346l104-56-2 92-104 52z" fill="#4264b0" opacity=".9" />
      <path d="M518 342l50-26 4 56 16 6-74 32-4-36z" fill="#6480c0" strokeWidth="2" />
      <path d="M506 346l-8 76M588 300l2 74" strokeWidth="5" />
    </g>
  </g>
);

const Scene = () => (
  <SceneSvg viewBox="168 130 899 556" role="img" aria-label="3D view of the model">
    <rect x="168" y="130" width="899" height="556" fill="#fefefe" />
    <g fill="none" stroke="#5a5a5a" strokeWidth=".8">
      <path d="M683 130L285 361v227l167 98M285 361l46 27M285 588l46-26" />
      <path d="M782 131l145 84v228L505 687M732 130v27M904 430l23 13" />
    </g>

    <path d="M331 388L732 156l15 9-385 222-16 10z" fill="#82a6fb" />
    <path d="M362 387L732 174v174L511 476z" fill="#7f99d6" />
    <path d="M504 473L732 341v7L514 474z" fill="#6f90e2" />
    <path d="M331 388l15 9v174l-15-9z" fill="#5a6c92" />

    <path d="M732 174l157 90v174l-157-90z" fill="#313130" />
    <path d="M732 174l15-9 157 91-15 8z" fill="#8b8b89" />
    <path d="M889 264l15-8v174l-15 8z" fill="#787876" />
    <path d="M346 397l157 89v175l-157-90z" fill="#313131" />
    <path d="M346 397l16-10 156 91-15 8z" fill="#969590" />
    <path d="M503 486l15-8v174l-15 9z" fill="#757575" />

    <g fill="none" stroke="#2c2c2e" strokeWidth=".8">
      <path d="M732 174l157 90v174l-157-90zM889 264l15-8v174l-15 8M747 165l157 91" />
      <path d="M346 397l157 89v175l-157-90M503 486l15-8v174l-15 9M362 387l156 91" />
      <path d="M480 473L927 215M480 474L732 330M479.500 473v214M792 366l112 64" stroke="#222" />
    </g>
    <g fill="none" stroke="#3760dc" strokeWidth="1.100">
      <path d="M331 562V388L732 156l15 9M362 387L732 174v174M331 562l15 9" />
      <path d="M514 474L732 348" />
    </g>
    <g fill="none" stroke="#28379a" strokeWidth="1">
      <path d="M331 562l149-87" strokeDasharray="14 2" />
      <path d="M362 562l142-82" strokeDasharray="9 4" />
      <path d="M346 571V397" stroke="#2b3b66" />
    </g>

    <Furniture />
    <path d="M480 471L732 327l60 35M480 474L732 331" fill="none" stroke="#1e2f70" strokeWidth=".8" />
    <path d="M674 477v11l2.500-2 2 4 1.500-1-2-4h3.500z" fill="#fff" stroke="#222" strokeWidth=".8" />
  </SceneSvg>
);

const viewIcons = [
  "detail",
  "cube",
  "sunOff",
  "shadowOff",
  "teapot",
  "cropOff",
  "crop",
  "lock",
  "glasses",
  "bulbSmall",
  "panel",
  "model",
  "model",
  "reveal",
];

const View3D = () => (
  <ViewArea>
    <ViewTabs>
      <ViewTab>
        <Icon name="plan" />
        <span>Level 1</span>
      </ViewTab>
      <ViewTab $active>
        <Icon name="house" />
        <span>{"{3D}"}</span>
        <Icon name="close" />
      </ViewTab>
      <TabMenu aria-label="Open views">
        <Icon name="customize" size={10} />
      </TabMenu>
    </ViewTabs>
    <Stage>
      <Scene />
      <CubeHolder>
        <ViewCube />
      </CubeHolder>
      <NavBar>
        <Icon name="chevron" size={6} />
        <svg width="13" height="13" viewBox="0 0 13 13" fill="none" stroke="#a4a4a8">
          <circle cx="6.500" cy="6.500" r="5.500" />
          <rect x="3.500" y="4" width="6" height="5" rx="1" />
        </svg>
        <Icon name="down" size={6} />
        <svg width="10" height="10" viewBox="0 0 10 10">
          <path d="M1 1h6v5H1z" fill="#b4b4b8" />
          <path d="M6 5l3 4" stroke="#77777b" strokeWidth="1.500" />
        </svg>
        <Icon name="down" size={6} />
        <Icon name="chevron" size={6} />
      </NavBar>
      <Credits>
        <CreditLine $soft>Vysotskiy Consulting</CreditLine>
        <CreditLine>www.bim.vc</CreditLine>
      </Credits>
      <Credits $side="right">
        <CreditLine $tall>Author: Alexander Vysotskiy</CreditLine>
        <CreditLine $tall>Localizer: Anton Shumilin</CreditLine>
        <CreditLine $tall>Course: "Autodesk Revit Architecture Pro"</CreditLine>
        <CreditLine $soft>Module: "Basic tools"</CreditLine>
        <CreditLine $soft>Lecture: "Create group. Basics of buildings"</CreditLine>
      </Credits>
    </Stage>
    <ScrollBar>
      <Icon name="up" />
      <Thumb />
      <Icon name="chevron" />
    </ScrollBar>
    <ViewBar>
      <ScaleButton>1 : 100</ScaleButton>
      <ViewIcons>
        {viewIcons.map((name, i) => (
          <IconButton key={i} aria-label={name}>
            <Icon name={name} size={11} />
          </IconButton>
        ))}
      </ViewIcons>
      <Icon name="prev" />
      <ScrollBar $x>
        <span />
        <Thumb $x />
        <Icon name="next" />
      </ScrollBar>
    </ViewBar>
    <Corner />
  </ViewArea>
);

/* ---------- properties ---------- */

const TypeSelector = styled.div`
  display: grid;
  grid-template-columns: 1fr 10px;
  align-items: center;
  height: 48px;
  padding-left: 10px;
  background: linear-gradient(#f7f7f8, #ededef);
  color: #bcbcc0;
  text-align: center;
`;

const FilterRow = styled.div`
  display: flex;
  align-items: center;
  gap: 3px;
  height: 15px;
  padding-left: 1px;
  background: #ededef;
`;

const Combo = styled.div`
  display: flex;
  align-items: center;
  width: ${(p) => p.$w}px;
  height: 13px;
  border: 1px solid ${(p) => p.$edge || "#c4c4c7"};
  background: ${(p) => p.$bg || "#fff"};
  color: ${(p) => p.$color || "#333"};

  select {
    flex: 1;
    min-width: 0;
    padding-left: 1px;
    appearance: none;
  }
`;

const EditType = styled.button`
  display: flex;
  align-items: center;
  gap: 2px;
  color: #b4b4b8;
  white-space: nowrap;
`;

const PropTable = styled.table`
  width: 100%;
  border-collapse: collapse;
  table-layout: fixed;

  col.name {
    width: 96px;
  }

  col.end {
    width: 9px;
  }
`;

const GroupRow = styled.tr`
  height: 12px;
  background: #dcdcde;

  th {
    padding: 0 0 0 2px;
    font-weight: 400;
    text-align: left;
  }

  td {
    padding: 0;
  }
`;

const PropRow = styled.tr`
  height: 13px;

  th, td {
    padding: 0;
    border-right: 1px solid #d6d6d9;
    border-bottom: 1px solid #d6d6d9;
    font-weight: 400;
    text-align: left;
  }

  th {
    padding-left: 6px;
  }

  input {
    display: block;
    width: 100%;
    height: 12px;
    padding-left: 1px;
    border: ${(p) => (p.$focus ? "1px solid #55555a" : "0")};
    outline: none;
  }
`;

const DockFooter = styled.div`
  display: flex;
  align-items: center;
  justify-content: space-between;
  height: 17px;
  margin-top: auto;
  padding: 0 2px 4px;
  background: #efeff0;

  a {
    color: #2a67c0;
  }
`;

const ApplyButton = styled.button`
  width: 46px;
  height: 14px;
  margin-top: 2px;
  background: #cbcbcd;
  color: #98989c;
`;

const propertyGroups = [
  {
    title: "Identity Data",
    rows: [
      { name: "Image", value: "", focus: true },
      { name: "Comments", value: "" },
      { name: "Mark", value: "" },
    ],
  },
  {
    title: "Phasing",
    rows: [
      { name: "Phase Created", value: "New Construction" },
      { name: "Phase Demolished", value: "None" },
    ],
  },
];

const Properties = () => (
  <Dock $right>
    <DockTitle $right>
      Properties
      <IconButton aria-label="Close properties">
        <Icon name="close" />
      </IconButton>
    </DockTitle>
    <TypeSelector>
      Multiple Categories Selected
      <Icon name="down" size={10} />
    </TypeSelector>
    <FilterRow>
      <Combo $w={147} $bg="#e2e2e4">
        <select aria-label="Selection filter">
          <option>Common (3)</option>
        </select>
        <Icon name="chevron" />
      </Combo>
      <EditType disabled>
        <Icon name="editType" size={10} />
        Edit Type
      </EditType>
    </FilterRow>
    <PropTable>
      <colgroup>
        <col className="name" />
        <col />
        <col className="end" />
      </colgroup>
      {propertyGroups.map((g) => (
        <tbody key={g.title}>
          <GroupRow>
            <th colSpan={2}>{g.title}</th>
            <td>
              <Icon name="collapse" size={9} />
            </td>
          </GroupRow>
          {g.rows.map((r) => (
            <PropRow key={r.name} $focus={r.focus}>
              <th>
                <label htmlFor={r.name}>{r.name}</label>
              </th>
              <td>
                <input id={r.name} defaultValue={r.value} />
              </td>
              <td />
            </PropRow>
          ))}
        </tbody>
      ))}
    </PropTable>
    <DockFooter>
      <a href="#help">Properties help</a>
      <ApplyButton disabled>Apply</ApplyButton>
    </DockFooter>
  </Dock>
);

/* ---------- status bar ---------- */

const StatusBar = styled.footer`
  display: grid;
  grid-template-columns: 622px auto 1fr;
  align-items: center;
  height: 20px;
  padding-bottom: 3px;
  background: #cbcbcc;
`;

const StatusText = styled.div`
  padding-left: 1px;
`;

const StatusGroup = styled.div`
  display: flex;
  align-items: center;
  justify-content: ${(p) => (p.$end ? "flex-end" : "flex-start")};
  gap: 4px;
  padding-right: ${(p) => (p.$end ? 42 : 0)}px;
`;

const Count = styled.span`
  margin: 0 ${(p) => (p.$wide ? 7 : 0)}px 0 ${(p) => (p.$wide ? 0 : -4)}px;
`;

/* ---------- ribbon ---------- */

const quickItems = [
  { name: "R", w: 18, text: "R", color: "#24579c" },
  { name: "doc", w: 15 },
  { name: "open", w: 19 },
  { name: "save", w: 15 },
  { name: "sync", w: 17 },
  { name: "down", w: 8 },
  { name: "undo", w: 15 },
  { name: "down", w: 8 },
  { name: "redo", w: 16 },
  { name: "down", w: 8 },
  { name: "print", w: 17 },
  { name: "measureBar", w: 22 },
  { name: "down", w: 6 },
  { name: "dim", w: 16 },
  { name: "tag", w: 16 },
  { name: "A", w: 16, text: "A" },
  { name: "house", w: 23 },
  { name: "down", w: 5 },
  { name: "section", w: 16 },
  { name: "thin", w: 18, on: true },
  { name: "closeHidden", w: 22 },
  { name: "windows", w: 13 },
  { name: "down", w: 6 },
  { name: "customize", w: 14 },
];

const tabs = [
  "Architecture",
  "Structure",
  "Steel",
  "Systems",
  "Insert",
  "Annotate",
  "Analyze",
  "Massing & Site",
  "Collaborate",
  "View",
  "Manage",
  "Add-Ins",
  "Modify | Multi-Select",
];

const RibbonPanels = () => (
  <Ribbon>
    <Panel $w={37}>
      <PanelBody $pad={5}>
        <ModifyButton>
          <BigIcon name="cursor" />
          Modify
        </ModifyButton>
      </PanelBody>
      <PanelTitle>
        Select <Icon name="down" size={10} />
      </PanelTitle>
    </Panel>
    <Panel $w={46}>
      <PanelBody $pad={10}>
        <Stack $w={26}>
          <ToggleButton aria-label="Type properties">
            <BigIcon name="props" />
          </ToggleButton>
          <ToggleButton $on aria-label="Properties">
            <BigIcon name="palette" size={20} />
          </ToggleButton>
        </Stack>
      </PanelBody>
      <PanelTitle>Properties</PanelTitle>
    </Panel>
    <Panel $w={50}>
      <PanelBody $pad={2}>
        <TallButton $w={28} $faded>
          <BigIcon name="paste" size={24} />
          Paste
          <Icon name="down" size={9} />
        </TallButton>
        <Rows $cols="22px">
          {["scissors", "copy", "match"].map((n) => (
            <Tool key={n} aria-label={n}>
              <Icon name={n} />
            </Tool>
          ))}
        </Rows>
      </PanelBody>
      <PanelTitle>Clipboard</PanelTitle>
    </Panel>
    <Panel $w={95}>
      <PanelBody $pad={4}>
        <Rows $cols="36px 12px" $align="start">
          {["Cope", "Cut", "Join"].map((n) => (
            <React.Fragment key={n}>
              <Tool>
                <Icon name={n.toLowerCase()} />
                {n}
              </Tool>
              <Tool aria-label={`${n} options`}>
                <Icon name="down" />
              </Tool>
            </React.Fragment>
          ))}
        </Rows>
        <Rows $cols="14px 18px 8px">
          {["wallJoin", "split", null, "beam", "paint", "down", "demolish", "hammer", null].map((n, i) =>
            n ? (
              <Tool key={i} aria-label={n}>
                <Icon name={n} />
              </Tool>
            ) : (
              <span key={i} />
            )
          )}
        </Rows>
      </PanelBody>
      <PanelTitle>Geometry</PanelTitle>
    </Panel>
    <Panel $w={156}>
      <PanelBody>
        <BigRows $cols="repeat(4, 26px)">
          {["align", "offset", "mirrorPick", "mirrorDraw", "move", "rotateCopy", "rotate", "corner"].map((n) => (
            <Tool key={n} aria-label={n}>
              <BigIcon name={n} />
            </Tool>
          ))}
        </BigRows>
        <Rows $cols="repeat(3, 17px)">
          {["splitEl", "splitGap", "unpin", "array", "scale", "pin", "trim", "trimMulti", "remove"].map((n) => (
            <Tool key={n} aria-label={n}>
              <Icon name={n} size={11} />
            </Tool>
          ))}
        </Rows>
      </PanelBody>
      <PanelTitle>Modify</PanelTitle>
    </Panel>
    <Panel $w={44}>
      <PanelBody $pad={4}>
        <Rows $cols="14px 8px 18px">
          {["bulb", "down", "override", "brush", "down", "linework", "displace", null, null].map((n, i) =>
            n ? (
              <Tool key={i} aria-label={n}>
                <Icon name={n} />
              </Tool>
            ) : (
              <span key={i} />
            )
          )}
        </Rows>
      </PanelBody>
      <PanelTitle>View</PanelTitle>
    </Panel>
    <Panel $w={38}>
      <PanelBody $pad={4}>
        <BigRows $cols="22px 12px">
          {["measureFaded", "measure"].map((n) => (
            <React.Fragment key={n}>
              <Tool aria-label={n}>
                <BigIcon name={n} size={20} />
              </Tool>
              <Icon name="down" size={10} />
            </React.Fragment>
          ))}
        </BigRows>
      </PanelBody>
      <PanelTitle>Measure</PanelTitle>
    </Panel>
    <Panel $w={56}>
      <PanelBody $pad={2}>
        <BigRows $cols="26px 26px">
          {["assembly", "group", "parts", "similar"].map((n) => (
            <Tool key={n} aria-label={n}>
              <BigIcon name={n} />
            </Tool>
          ))}
        </BigRows>
      </PanelBody>
      <PanelTitle>Create</PanelTitle>
    </Panel>
    <Panel $w={76} $green>
      <PanelBody>
        <TallButton $w={30}>
          <BigIcon name="filter" size={24} />
          Filter
        </TallButton>
        <Divider />
        <Rows $cols="36px" $align="start">
          <Tool>
            <Icon name="selSave" size={11} />
            Save
          </Tool>
          <Tool $faded>
            <Icon name="selLoad" size={11} />
            Load
          </Tool>
          <Tool>
            <Icon name="selEdit" size={11} />
            Edit
          </Tool>
        </Rows>
      </PanelBody>
      <PanelTitle>Selection</PanelTitle>
    </Panel>
  </Ribbon>
);

const App = () => {
  const [activeTab, setActiveTab] = useState("Modify | Multi-Select"); // ribbon tab in front

  return (
    <>
      <GlobalStyle />
      <Page>
        <Header>
          <TitleBar>
            <QuickAccess>
              {quickItems.map((q, i) => (
                <QuickButton key={i} $w={q.w} $on={q.on} $color={q.color} aria-label={q.name}>
                  {q.text || <Icon name={q.name} size={q.name === "down" ? 9 : 12} />}
                </QuickButton>
              ))}
            </QuickAccess>
            <TitleText>{"Autodesk Revit 2020.1 - VC_Panel tools - 3D View: {3D}"}</TitleText>
            <Account>
              <Icon name="left" size={10} />
              <Icon name="binoculars" />
              <Icon name="user" />
              <UserName>007D9GQ4</UserName>
              <Icon name="down" size={10} />
              <Icon name="cart" />
              <HelpButton aria-label="Help">
                <Icon name="help" />
              </HelpButton>
              <Icon name="down" size={10} />
              <WindowControls>
                {["minimize", "restore", "close"].map((n) => (
                  <IconButton key={n} aria-label={n}>
                    <Icon name={n} />
                  </IconButton>
                ))}
              </WindowControls>
            </Account>
          </TitleBar>
          <TabRow>
            <RibbonTab $file>File</RibbonTab>
            {tabs.map((t) => (
              <RibbonTab key={t} $active={t === activeTab} onClick={() => setActiveTab(t)}>
                {t}
              </RibbonTab>
            ))}
            <IconButton aria-label="Minimize ribbon">
              <Icon name="ribbonToggle" />
            </IconButton>
          </TabRow>
          <RibbonPanels />
          <OptionsBar>Modify | Multi-Select</OptionsBar>
          <Brand>
            <svg width="58" height="48" viewBox="414 66 174 144" aria-hidden="true">
              <path d="M415 67h172l-86 140z" fill="#d96a66" />
              <path d="M415 67h172l-20 32c-60-20-90 0-110 36z" fill="#c9564f" />
              <path d="M430 72h142l-12 16H442z" fill="#e58f80" />
              <path d="M443 80h33l27 56 27-56h30l-57 100z" fill="#fdf7f5" />
            </svg>
            <BrandName>VYSOTSKIY</BrandName>
            <BrandSub>CONSULTING</BrandSub>
          </Brand>
        </Header>

        <Workspace>
          <ProjectBrowser />
          <View3D />
          <Properties />
        </Workspace>

        <StatusBar>
          <StatusText>Walls : Basic Wall : Generic - 200mm</StatusText>
          <StatusGroup>
            <Icon name="workset" />
            <Combo $w={136} $edge="#d8d8da">
              <select aria-label="Active workset" />
              <Icon name="chevron" size={10} />
            </Combo>
            <Icon name="editable" size={10} />
            <Count $wide>:0</Count>
            <Icon name="design" size={11} />
            <Icon name="design2" size={11} />
            <Combo $w={137} $edge="#d8d8da" $color="#8a8a8e">
              <select aria-label="Design option">
                <option>Main Model</option>
              </select>
              <Icon name="chevron" size={10} />
            </Combo>
          </StatusGroup>
          <StatusGroup $end>
            {["pickOff", "pickUnder", "pickPin", "pickFace", "drag", "ring", "funnel"].map((n) => (
              <IconButton key={n} aria-label={n}>
                <Icon name={n} />
              </IconButton>
            ))}
            <Count>:3</Count>
          </StatusGroup>
        </StatusBar>
      </Page>
    </>
  );
};

export default App;
